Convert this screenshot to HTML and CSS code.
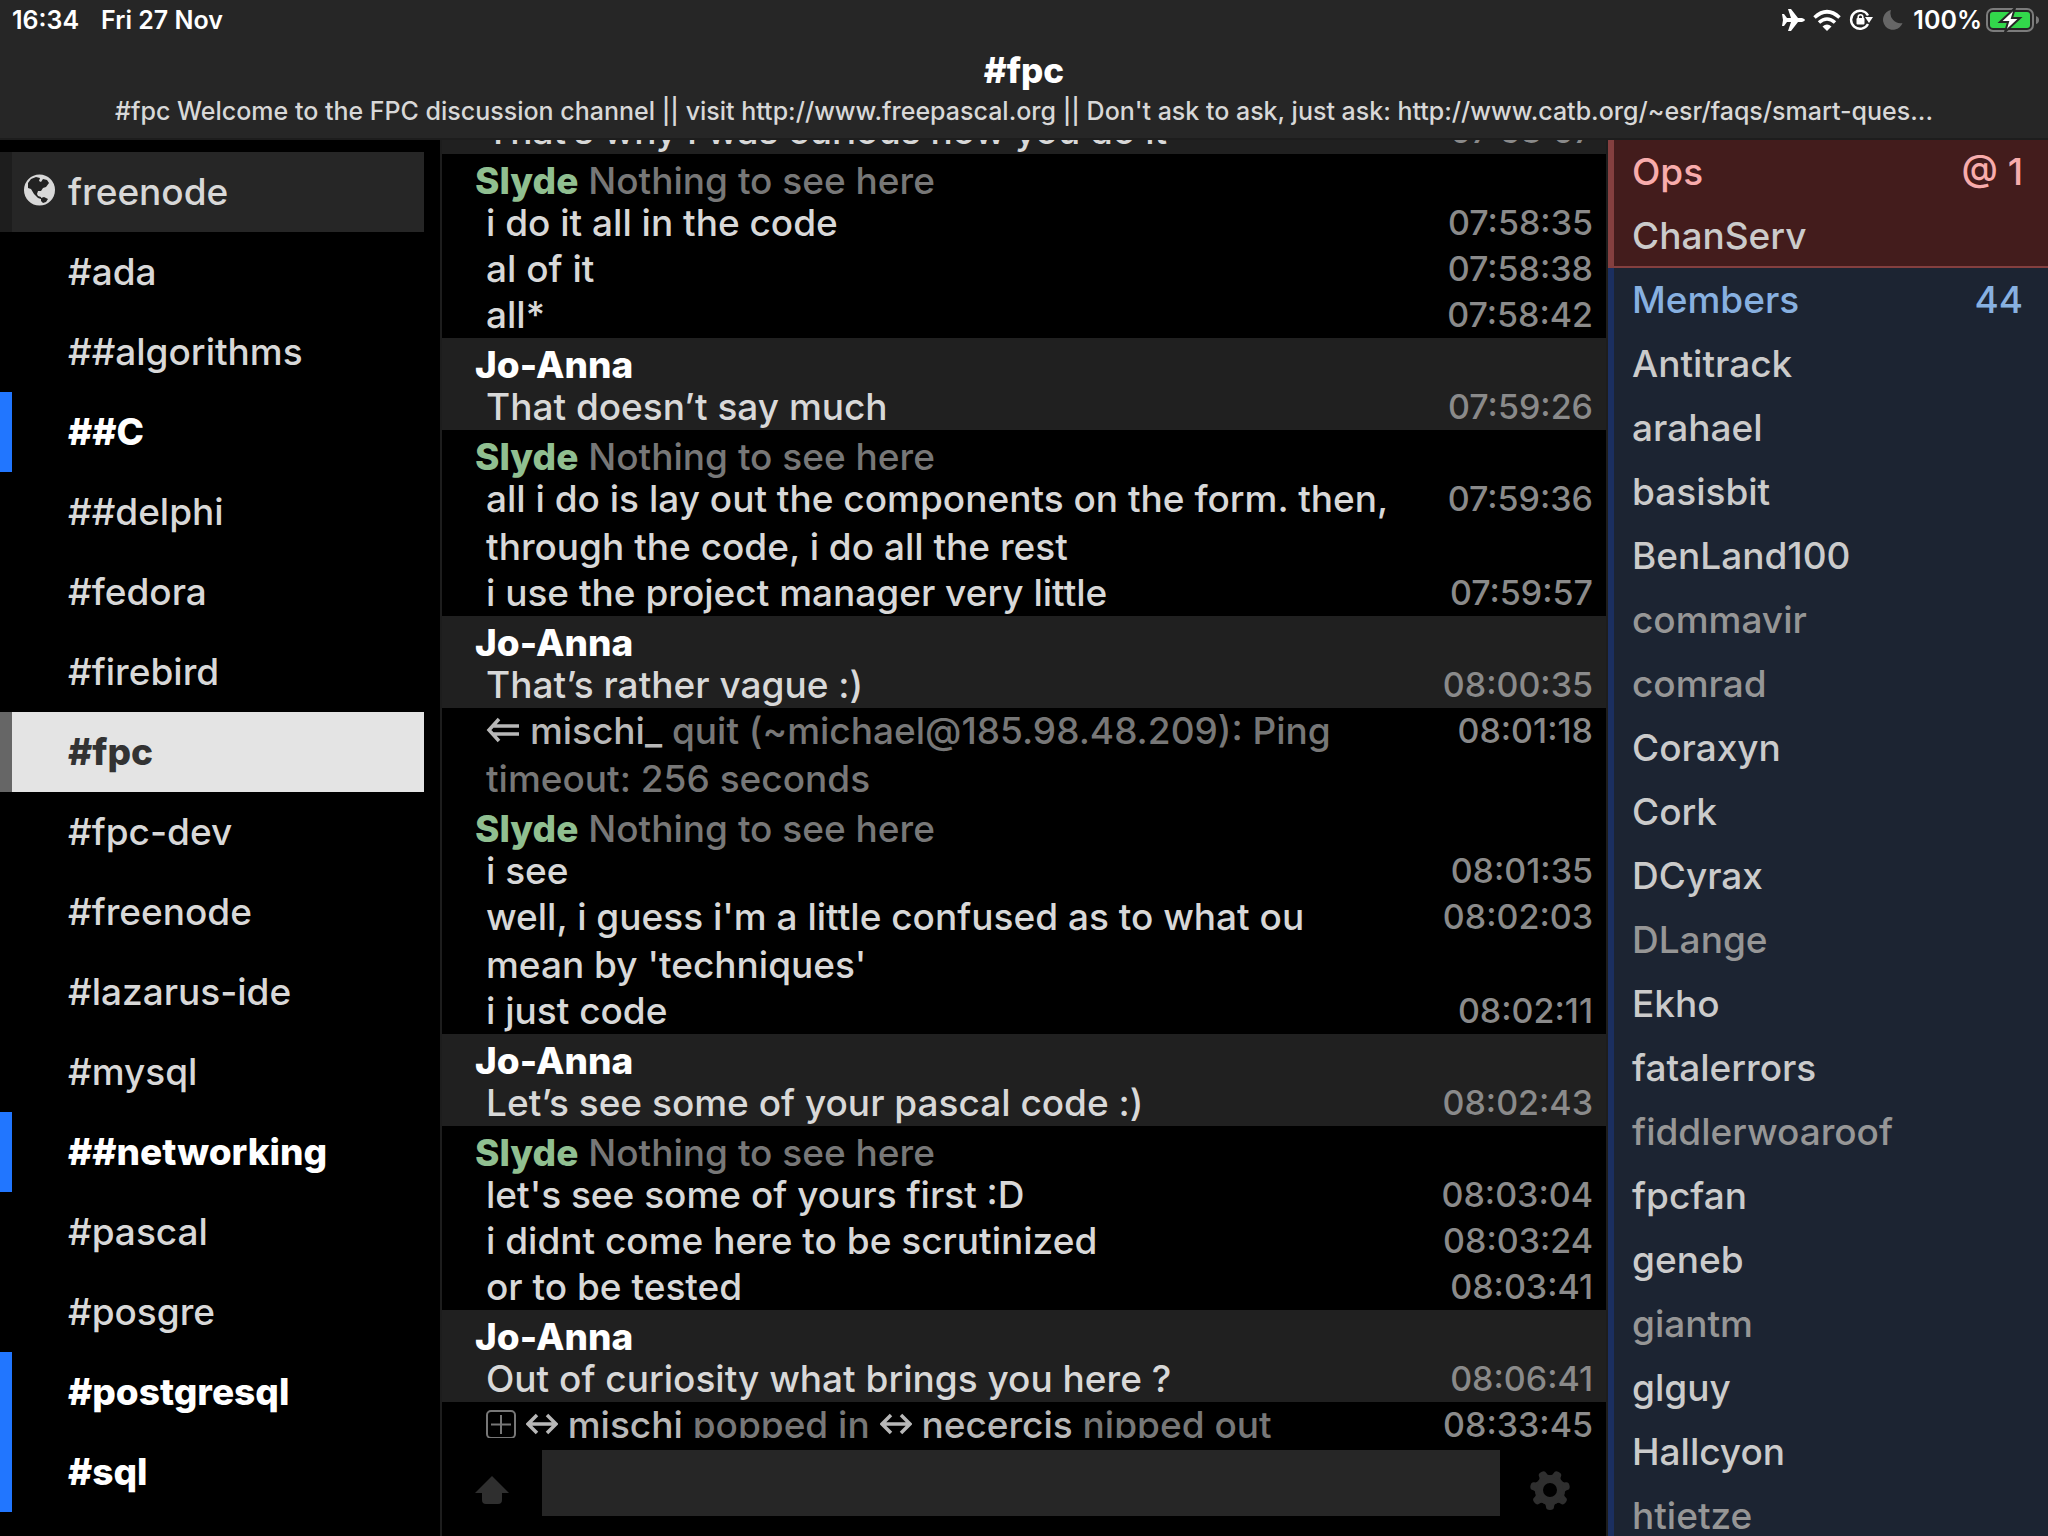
FILE: index.html
```html
<!DOCTYPE html>
<html lang="en">
<head>
    <meta charset="UTF-8">
    <meta name="viewport" content="width=device-width, initial-scale=1.0">
    <title>#fpc</title>
    <link rel="stylesheet" href="styles.css">
</head>
<body>
    <header class="top">
        <div class="status">
            <span>16:34</span>
            <span class="date">Fri 27 Nov</span>
            <div class="status-icons">
                <svg width="24" height="22" viewBox="0 0 24 22" fill="#fff"><path d="M1 5h2l3 4h4L7 0h3l7 9h4q3 1 3 2t-3 2h-4l-7 9H7l3-9H6l-3 4H1l1-6z"/></svg>
                <svg class="wifi" width="28" height="22" viewBox="0 0 28 22"><g fill="none" stroke="#fff" stroke-width="3.600"><path d="M1.500 8.500Q14-3 26.500 8.500"/><path d="M6 13.500Q14 6.500 22 13.500"/></g><path d="M9.500 17.500q4.500-4 9 0L14 22z" fill="#fff"/></svg>
                <svg class="lock" width="24" height="22" viewBox="0 0 24 22"><path d="M19 15A9 9 0 1 1 19 6.500" fill="none" stroke="#fff" stroke-width="2.400"/><path d="M16 8h8l-4 6z" fill="#fff"/><rect x="7.500" y="9" width="8" height="6.500" rx="1" fill="#fff"/><path d="M9.200 10V8q0-2.300 2.300-2.300T13.800 8v2" fill="none" stroke="#fff" stroke-width="1.600"/></svg>
                <svg class="moon" width="20" height="20" viewBox="0 0 20 20"><path d="M8 0a10 10 0 1 0 11.500 13A10 10 0 0 1 8 0z" fill="#666"/></svg>
                <span>100%</span>
                <svg class="battery" width="54" height="24" viewBox="0 0 54 24"><rect x="1" y="1" width="46" height="22" rx="6" fill="none" stroke="#7c7c7c" stroke-width="2"/><rect x="4" y="4" width="40" height="16" rx="3" fill="#32d74b"/><path d="M50 8q3 1 3 4t-3 4z" fill="#7c7c7c"/><path d="M29 0L14 14h8l-3 10 15-14h-8z" fill="#fff" stroke="#262626" stroke-width="2"/></svg>
            </div>
        </div>
        <h1>#fpc</h1>
        <p class="topic">#fpc Welcome to the FPC discussion channel || visit http://www.freepascal.org || Don't ask to ask, just ask: http://www.catb.org/~esr/faqs/smart-ques...</p>
    </header>

    <main class="main">
        <nav class="channels">
            <a href="#" class="server">
                <svg width="32" height="36" viewBox="0 0 32 36"><circle cx="15.500" cy="17" r="15.500" fill="#d8d8d8"/><path d="M4 10l3-4 5-2 4 1-1 3 2 1 2-3 4 1 2 3-3 4-3 1-2 3-3 0-1 3 1 2 3 1 0 2-3-1-4-4-3-5-3-1z" fill="#222"/><path d="M17 25l3-1 4 2-2 3-3 1-2-2z" fill="#222"/></svg>
                freenode
            </a>
            <a href="#">#ada</a>
            <a href="#">##algorithms</a>
            <a href="#" class="unread">##C</a>
            <a href="#">##delphi</a>
            <a href="#">#fedora</a>
            <a href="#">#firebird</a>
            <a href="#" class="active">#fpc</a>
            <a href="#">#fpc-dev</a>
            <a href="#">#freenode</a>
            <a href="#">#lazarus-ide</a>
            <a href="#">#mysql</a>
            <a href="#" class="unread">##networking</a>
            <a href="#">#pascal</a>
            <a href="#">#posgre</a>
            <a href="#" class="unread">#postgresql</a>
            <a href="#" class="unread">#sql</a>
        </nav>

        <section class="chat">
            <div class="log">
                <div class="group own">
                    <div class="msg"><p>That’s why I was curious how you do it</p><time>07:58:07</time></div>
                </div>
                <div class="group">
                    <h2><b>Slyde</b> Nothing to see here</h2>
                    <div class="msg"><p>i do it all in the code</p><time>07:58:35</time></div>
                    <div class="msg"><p>al of it</p><time>07:58:38</time></div>
                    <div class="msg"><p>all*</p><time>07:58:42</time></div>
                </div>
                <div class="group own">
                    <h2><b>Jo-Anna</b></h2>
                    <div class="msg"><p>That doesn’t say much</p><time>07:59:26</time></div>
                </div>
                <div class="group">
                    <h2><b>Slyde</b> Nothing to see here</h2>
                    <div class="msg"><p>all i do is lay out the components on the form. then, through the code, i do all the rest</p><time>07:59:36</time></div>
                    <div class="msg"><p>i use the project manager very little</p><time>07:59:57</time></div>
                </div>
                <div class="group own">
                    <h2><b>Jo-Anna</b></h2>
                    <div class="msg"><p>That’s rather vague :)</p><time>08:00:35</time></div>
                </div>
                <div class="group">
                    <div class="msg event"><p><svg width="34" height="28" viewBox="0 0 34 28"><path d="M13 3L3 14l10 11M7 10h26M7 18h26" fill="none" stroke="#b8b8b8" stroke-width="3.500"/></svg> <b>mischi_</b> quit (~michael@185.98.48.209): Ping timeout: 256 seconds</p><time>08:01:18</time></div>
                </div>
                <div class="group">
                    <h2><b>Slyde</b> Nothing to see here</h2>
                    <div class="msg"><p>i see</p><time>08:01:35</time></div>
                    <div class="msg"><p>well, i guess i'm a little confused as to what ou mean by 'techniques'</p><time>08:02:03</time></div>
                    <div class="msg"><p>i just code</p><time>08:02:11</time></div>
                </div>
                <div class="group own">
                    <h2><b>Jo-Anna</b></h2>
                    <div class="msg"><p>Let’s see some of your pascal code :)</p><time>08:02:43</time></div>
                </div>
                <div class="group">
                    <h2><b>Slyde</b> Nothing to see here</h2>
                    <div class="msg"><p>let's see some of yours first :D</p><time>08:03:04</time></div>
                    <div class="msg"><p>i didnt come here to be scrutinized</p><time>08:03:24</time></div>
                    <div class="msg"><p>or to be tested</p><time>08:03:41</time></div>
                </div>
                <div class="group own">
                    <h2><b>Jo-Anna</b></h2>
                    <div class="msg"><p>Out of curiosity what brings you here ?</p><time>08:06:41</time></div>
                </div>
                <div class="group last">
                    <div class="msg event"><p><svg width="30" height="28" viewBox="0 0 30 28"><rect x="1" y="1" width="28" height="27" rx="4" fill="none" stroke="#777" stroke-width="2"/><path d="M15 5v19M5 14.500h20" stroke="#777" stroke-width="2"/></svg> <svg width="32" height="28" viewBox="0 0 32 28"><path d="M3 14h26M11 5l-9 9 9 9M21 5l9 9-9 9" fill="none" stroke="#b8b8b8" stroke-width="3.500"/></svg> <b>mischi</b> popped in <svg width="32" height="28" viewBox="0 0 32 28"><path d="M3 14h26M11 5l-9 9 9 9M21 5l9 9-9 9" fill="none" stroke="#b8b8b8" stroke-width="3.500"/></svg> <b>necercis</b> nipped out</p><time>08:33:45</time></div>
                </div>
            </div>
            <form class="compose">
                <button type="button" aria-label="History"><svg width="34" height="28" viewBox="0 0 34 28" fill="#2f2f2f"><path d="M17 0l17 17h-7v7q0 4-4 4H11q-4 0-4-4v-7H0z"/></svg></button>
                <input type="text" aria-label="Message">
                <button type="button" aria-label="Settings">
                    <svg width="40" height="40" viewBox="-20 -20 40 40" fill="#2f2f2f">
                        <circle r="11" fill="none" stroke="#2f2f2f" stroke-width="8"/>
                        <path id="tooth" d="M-7 13q3 1 3 4 0 3 4 3t4-3q0-3 3-4z"/>
                        <use href="#tooth" transform="rotate(51.430)"/>
                        <use href="#tooth" transform="rotate(102.860)"/>
                        <use href="#tooth" transform="rotate(154.290)"/>
                        <use href="#tooth" transform="rotate(205.710)"/>
                        <use href="#tooth" transform="rotate(257.140)"/>
                        <use href="#tooth" transform="rotate(308.570)"/>
                    </svg>
                </button>
            </form>
        </section>

        <aside class="people">
            <ul class="ops">
                <li class="role"><span>Ops</span><span>@ 1</span></li>
                <li>ChanServ</li>
            </ul>
            <ul class="members">
                <li class="role"><span>Members</span><span>44</span></li>
                <li>Antitrack</li>
                <li>arahael</li>
                <li>basisbit</li>
                <li>BenLand100</li>
                <li class="away">commavir</li>
                <li class="away">comrad</li>
                <li>Coraxyn</li>
                <li>Cork</li>
                <li>DCyrax</li>
                <li class="away">DLange</li>
                <li>Ekho</li>
                <li>fatalerrors</li>
                <li class="away">fiddlerwoaroof</li>
                <li>fpcfan</li>
                <li>geneb</li>
                <li class="away">giantm</li>
                <li>glguy</li>
                <li>Hallcyon</li>
                <li class="away">htietze</li>
            </ul>
        </aside>
    </main>
</body>
</html>
```
FILE: styles.css
```css
* {
    box-sizing: border-box;
}

body {
    display: flex;
    flex-direction: column;
    height: 100vh;
    margin: 0;
    overflow: hidden;
    background-color: #000;
    color: #d8d8d8;
    font-family: Inter, 'Liberation Sans', sans-serif;
    font-size: 37px;
    font-weight: 500;
}

h1, h2, p, ul {
    margin: 0;
    padding: 0;
}

/* Header */
.top {
    background-color: #262626;
    border-bottom: 2px solid #1d1d1d;
    text-align: center;
}

.status {
    display: flex;
    align-items: center;
    height: 40px;
    padding: 0 8px 0 12px;
    color: #fff;
    font-size: 25px;
    font-weight: 600;
}

.date {
    margin-left: 22px;
}

.status-icons {
    display: flex;
    align-items: center;
    margin-left: auto;
}

.wifi,
.lock {
    margin-left: 8px;
}

.moon {
    margin: 0 10px;
}

.battery {
    margin-left: 4px;
}

h1 {
    color: #fff;
    font-size: 35px;
    font-weight: 800;
    line-height: 60px;
}

.topic {
    height: 38px;
    padding: 0 80px;
    font-size: 25px;
    line-height: 22px;
    white-space: nowrap;
}

/* Three columns */
.main {
    display: grid;
    grid-template-columns: 442px 1fr 442px;
    flex: 1;
    min-height: 0;
}

/* Channel list */
.channels {
    display: flex;
    flex-direction: column;
    padding: 12px 16px 0 0;
    overflow: hidden;
    border-right: 2px solid #1d1d1d;
}

.channels a {
    display: flex;
    flex-shrink: 0;
    align-items: center;
    height: 80px;
    padding: 0 0 2px 56px;
    border-left: 12px solid transparent;
    color: #d8d8d8;
    text-decoration: none;
}

.channels .server {
    padding-left: 12px;
    gap: 12px;
    background-color: #262626;
    border-color: #1d1d1d;
}

.channels .unread {
    border-color: #2176ff;
    color: #fff;
    font-weight: 800;
}

.channels .active {
    background-color: #e4e4e4;
    border-color: #666;
    color: #333;
    font-weight: 800;
}

/* Chat */
.chat {
    display: flex;
    flex-direction: column;
    min-width: 0;
    min-height: 0;
}

/* newest line sits at the bottom, older ones run off the top */
.log {
    display: flex;
    flex: 1;
    flex-direction: column;
    justify-content: flex-end;
    min-height: 0;
    overflow: hidden;
}

.group {
    display: flow-root;
    flex-shrink: 0;
    padding: 0 13px 0 33px;
}

.own {
    background-color: #202020;
}

.last {
    margin-bottom: -10px;
}

h2 {
    height: 46px;
    color: #777;
    font-size: 37px;
    font-weight: 500;
    line-height: 54px;
}

h2 b {
    color: #90bf90;
    font-weight: 800;
}

.own b {
    color: #fff;
}

.msg {
    display: flex;
    justify-content: space-between;
    gap: 44px;
    margin: -1px 0;
    padding-left: 11px;
    line-height: 48px;
}

.msg + .msg {
    margin-top: -2px;
}

.msg time {
    color: #8a8a8a;
    font-size: 34px;
}

.event {
    color: #777;
}

.event b {
    color: #b8b8b8;
    font-weight: 500;
}

.compose {
    display: flex;
    height: 98px;
    padding: 12px 6px 20px 0;
}

.compose button {
    display: flex;
    align-items: center;
    justify-content: center;
    width: 100px;
    padding: 14px 0 0;
    background: none;
    border: none;
}

.compose input {
    flex: 1;
    min-width: 0;
    padding: 0 16px;
    background-color: #262626;
    border: none;
    color: #d8d8d8;
    font: inherit;
}

/* Member list */
.people {
    overflow: hidden;
    border-left: 2px solid #1d1d1d;
    color: #cbcbcb;
}

.people ul {
    list-style: none;
}

.people li {
    height: 64px;
    padding: 0 25px 0 18px;
    line-height: 64px;
}

.ops {
    height: 128px;
    background-color: #431c1c;
    border-bottom: 2px solid #843f3f;
    border-left: 6px solid #843f3f;
}

.members {
    background-color: #1c2432;
    border-left: 6px solid #1b2f60;
}

.people .role {
    display: flex;
    justify-content: space-between;
}

.ops .role {
    color: #f8acac;
}

.members .role {
    color: #87b0e0;
}

.members .away {
    color: #969696;
}
```
